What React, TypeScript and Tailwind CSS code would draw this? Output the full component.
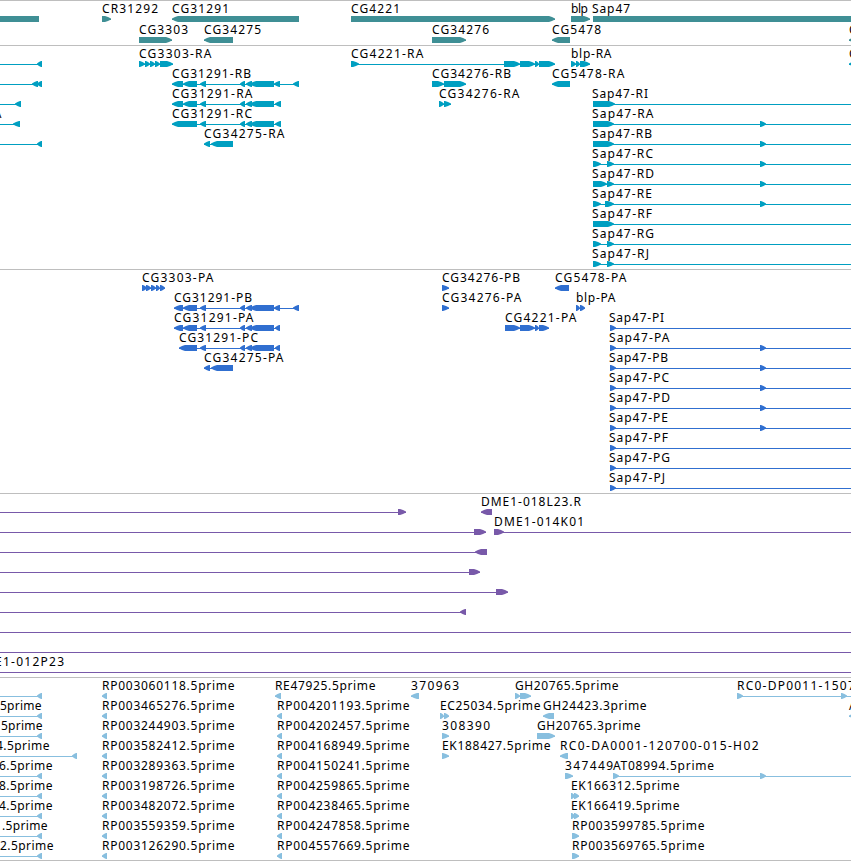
import React from 'react';

type Dir = 'left' | 'right';
type Span = [number, number];

interface Feature {
  name?: string;
  // label offset, only needed when it differs from the first exon
  labelX?: number;
  dir?: Dir;
  exons?: Span[];
  // full extent of the thin line, when it runs past the exons
  range?: Span;
}

interface TrackProps {
  color: string;
  rows: Feature[][];
  className?: string;
}

const VIEW_WIDTH = 851;
const END = 900;
const START = -20;
const FONT = '12px "Noto Sans"';

// Advance widths of the label characters, in pixels
const ADVANCE: Record<string, number> = {
  A: 8.5, B: 7, C: 8, D: 9, E: 7, F: 7, G: 9, H: 9, I: 3, J: 4, K: 8, L: 6, M: 11,
  P: 7, R: 8, S: 8, T: 7, a: 7, b: 7, e: 7, i: 3, l: 3, m: 11.5, p: 7, r: 5, '.': 4, '-': 7,
};

const canvas = document.createElement('canvas').getContext('2d');

const trackingFor = (text: string) => {
  if (!canvas) return 0.7;
  canvas.font = FONT;
  const wanted = text.split('').reduce((sum, ch) => sum + (ADVANCE[ch] ?? 8), 0);
  return (wanted - canvas.measureText(text).width) / (text.length - 1);
};

const exonPoints = ([a, b]: Span, dir: Dir) => {
  const tip = Math.min(6, b - a - 1);
  const mid = tip / 2;
  return dir === 'right'
    ? `${a},0 ${b - tip},0 ${b - mid},1 ${b},2.5 ${b},3.5 ${b - mid},5 ${b - tip},6 ${a},6`
    : `${b},0 ${a + tip},0 ${a + mid},1 ${a},2.5 ${a},3.5 ${a + mid},5 ${a + tip},6 ${b},6`;
};

const Glyph: React.FC<{ feature: Feature }> = ({ feature }) => {
  const { exons = [], dir = 'right', range } = feature;
  const from = range ? range[0] : exons[0][0];
  const to = range ? range[1] : exons[exons.length - 1][1];
  return (
    <g>
      <rect x={from} y={3} width={to - from} height={1} />
      {exons.map((exon) => (
        <polygon key={exon[0]} points={exonPoints(exon, dir)} />
      ))}
    </g>
  );
};

const Row: React.FC<{ features: Feature[] }> = ({ features }) => (
  <div className="relative flex h-5 flex-col justify-end">
    {features.map((feature, i) => {
      if (!feature.name) return null;
      const x = feature.labelX ?? feature.exons?.[0][0] ?? 0;
      return (
        <span
          key={i}
          className="absolute -top-px whitespace-pre text-[12px] leading-4 text-black"
          style={{ left: x, letterSpacing: trackingFor(feature.name) }}
        >
          {feature.name}
        </span>
      );
    })}
    <svg width={VIEW_WIDTH} height="6" className="block" fill="currentColor">
      {features.map((feature, i) => (
        <Glyph key={i} feature={feature} />
      ))}
    </svg>
  </div>
);

const Track: React.FC<TrackProps> = ({ color, rows, className = 'pb-0.5' }) => (
  <section className={`border-t border-[#bebebe] pt-px ${color} ${className}`}>
    {rows.map((features, i) => (
      <Row key={i} features={features} />
    ))}
  </section>
);

const right = (name: string, exons: Span[], range?: Span): Feature => ({ name, dir: 'right', exons, range });
const left = (name: string, exons: Span[], range?: Span): Feature => ({ name, dir: 'left', exons, range });

// Sap47 isoforms all run past the right edge
const sap47 = (suffix: string, exons: Span[]): Feature => ({
  name: `Sap47-${suffix}`,
  labelX: exons[0][0] - 1,
  dir: 'right',
  exons,
  range: [exons[0][0], END],
});

// Feature entering from the left edge of the view
const incoming = (exons: Span[], dir: Dir = 'left', name?: string, labelX?: number): Feature => ({
  name,
  labelX,
  dir,
  exons,
  range: [START, exons.length ? exons[exons.length - 1][1] : END],
});

const genes: Feature[][] = [
  [
    { dir: 'left', exons: [[START, 39]] },
    right('CR31292', [[102, 111]]),
    left('CG31291', [[172, 299]]),
    right('CG4221', [[351, 555]]),
    right('blp', [[571, 590]]),
    { name: 'Sap47', labelX: 592, dir: 'right', exons: [[593, END]] },
  ],
  [
    right('CG3303', [[139, 172]]),
    left('CG34275', [[204, 233]]),
    right('CG34276', [[432, 466]]),
    left('CG5478', [[552, 570]]),
    left('CG', [[849, END]]),
  ],
];

const cg31291Middle: Span[] = [[200, 206], [240, 245], [246, 252], [250, 274]];
const farExon: Span = [760, 766];

const transcripts: Feature[][] = [
  [
    incoming([[37, 42]]),
    right('CG3303-RA', [[139, 145], [145, 150], [150, 155], [155, 160], [160, 173]]),
    right('CG4221-RA', [[351, 359], [504, 520], [520, 535], [535, 539], [539, 555]]),
    right('blp-RA', [[571, 576], [576, 580], [580, 590]]),
    left('CG', [[849, END]]),
  ],
  [
    incoming([[32, 38], [37, 42]]),
    left('CG31291-RB', [[172, 183], [183, 197], ...cg31291Middle, [274, 280], [293, 299]]),
    right('CG34276-RB', [[432, 444], [444, 466]]),
    left('CG5478-RA', [[552, 570]]),
  ],
  [
    incoming([[15, 21]]),
    left('CG31291-RA', [[172, 183], [183, 197], ...cg31291Middle, [275, 281]]),
    right('CG34276-RA', [[439, 444], [444, 451]]),
    sap47('RI', [[593, 615]]),
  ],
  [
    incoming([[13, 20]], 'left', 'RA', -15),
    left('CG31291-RC', [[172, 197], ...cg31291Middle, [275, 281]]),
    sap47('RA', [[593, 614], farExon]),
  ],
  [
    incoming([[37, 42]]),
    left('CG34275-RA', [[204, 210], [211, 233]]),
    sap47('RB', [[593, 614], farExon]),
  ],
  [sap47('RC', [[593, 601], [607, 614], farExon])],
  [sap47('RD', [[593, 607], [607, 614], farExon])],
  [sap47('RE', [[593, 601], [605, 614], farExon])],
  [sap47('RF', [[593, 614]])],
  [sap47('RG', [[593, 601], [607, 614]])],
  [sap47('RJ', [[593, 601], [607, 614]])],
];

const proteins: Feature[][] = [
  [
    right('CG3303-PA', [[142, 147], [146, 151], [151, 156], [156, 160], [160, 165]]),
    right('CG34276-PB', [[442, 449]]),
    left('CG5478-PA', [[555, 569]]),
  ],
  [
    left('CG31291-PB', [[174, 183], [183, 197], ...cg31291Middle, [274, 280], [293, 299]]),
    right('CG34276-PA', [[442, 449]]),
    right('blp-PA', [[576, 580], [580, 585]]),
  ],
  [
    left('CG31291-PA', [[174, 183], [183, 197], ...cg31291Middle, [275, 280]]),
    right('CG4221-PA', [[505, 520], [520, 535], [535, 539], [539, 549]]),
    sap47('PI', [[610, 616]]),
  ],
  [
    left('CG31291-PC', [[179, 197], ...cg31291Middle, [275, 280]]),
    sap47('PA', [[610, 616], farExon]),
  ],
  [
    left('CG34275-PA', [[204, 210], [211, 233]]),
    sap47('PB', [[610, 616], farExon]),
  ],
  [sap47('PC', [[610, 616], farExon])],
  [sap47('PD', [[610, 616], farExon])],
  [sap47('PE', [[610, 616], farExon])],
  [sap47('PF', [[610, 616]])],
  [sap47('PG', [[610, 616]])],
  [sap47('PJ', [[610, 616]])],
];

const clones: Feature[][] = [
  [incoming([[398, 406]], 'right'), left('DME1-018L23.R', [[481, 492]])],
  [incoming([[474, 486]], 'right'), right('DME1-014K01', [[494, 504]], [494, END])],
  [incoming([[475, 487]])],
  [incoming([[469, 480]], 'right')],
  [incoming([[496, 508]], 'right')],
  [incoming([[460, 466]])],
  [incoming([])],
  [incoming([])],
  [incoming([], 'right', 'E1-012P23', -5)],
];

const ests: Feature[][] = [
  [
    incoming([[37, 42]]),
    left('RP003060118.5prime', [[102, 107]]),
    left('RE47925.5prime', [[275, 281]]),
    left('370963', [[411, 419]]),
    right('GH20765.5prime', [[515, 520], [520, 531]]),
    right('RC0-DP0011-150700', [[737, 743], [841, 847]], [737, END]),
  ],
  [
    incoming([[37, 42]], 'left', '5prime', 0),
    left('RP003465276.5prime', [[102, 107]]),
    left('RP004201193.5prime', [[277, 282]]),
    right('EC25034.5prime', [[440, 444], [444, 449]]),
    left('GH24423.3prime', [[543, 554]]),
    left('AT', [[849, END]]),
  ],
  [
    incoming([[37, 42]], 'left', '5prime', 1),
    left('RP003244903.5prime', [[102, 107]]),
    left('RP004202457.5prime', [[277, 282]]),
    right('308390', [[442, 449]]),
    right('GH20765.3prime', [[537, 555]]),
  ],
  [
    incoming([[72, 77]], 'left', '4.5prime', -4),
    left('RP003582412.5prime', [[102, 107]]),
    left('RP004168949.5prime', [[277, 282]]),
    right('EK188427.5prime', [[442, 449]]),
    left('RC0-DA0001-120700-015-H02', [[560, 568]]),
  ],
  [
    incoming([[37, 42]], 'left', '6.5prime', -1),
    left('RP003289363.5prime', [[102, 107]]),
    left('RP004150241.5prime', [[277, 282]]),
    right('347449', [[565, 573]]),
    right('AT08994.5prime', [[613, 619], [760, 766]], [613, END]),
  ],
  [
    incoming([[37, 42]], 'left', '8.5prime', -1),
    left('RP003198726.5prime', [[102, 107]]),
    left('RP004259865.5prime', [[277, 282]]),
    right('EK166312.5prime', [[571, 575], [574, 579]]),
  ],
  [
    incoming([[37, 42]], 'left', '4.5prime', -1),
    left('RP003482072.5prime', [[102, 107]]),
    left('RP004238465.5prime', [[277, 282]]),
    right('EK166419.5prime', [[571, 575], [574, 579]]),
  ],
  [
    incoming([[37, 42]], 'left', '.5prime', 2),
    left('RP003559359.5prime', [[102, 107]]),
    left('RP004247858.5prime', [[277, 282]]),
    right('RP003599785.5prime', [[572, 575], [573, 579]]),
  ],
  [
    incoming([[37, 42]], 'left', '2.5prime', 0),
    left('RP003126290.5prime', [[102, 107]]),
    left('RP004557669.5prime', [[277, 282]]),
    right('RP003569765.5prime', [[572, 575], [573, 579]]),
  ],
];

const App: React.FC = () => (
  <main className="w-[851px] overflow-hidden bg-white font-['Noto_Sans',sans-serif]">
    <Track color="text-[#3f8f95]" rows={genes} className="flex flex-col gap-px pb-0.5" />
    <Track color="text-[#009fc1]" rows={transcripts} />
    <Track color="text-[#306fd0]" rows={proteins} />
    <Track color="text-[#7859a9]" rows={clones} />
    <Track color="text-[#88bfdf]" rows={ests} className="border-b pb-px" />
  </main>
);

export default App;
